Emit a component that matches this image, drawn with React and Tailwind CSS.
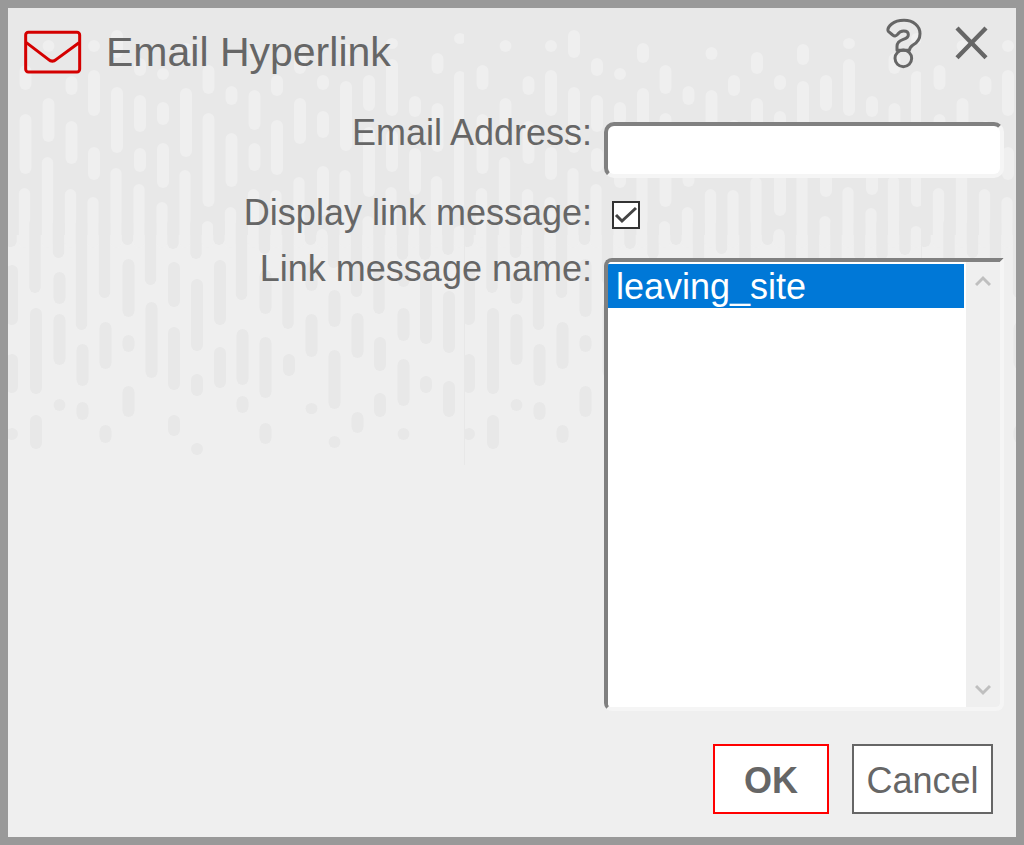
import { useState } from 'react';

// Background texture: each column is [centre x, [top, bottom], ...].
// Light bars melt into the lower half, dark bars melt into the upper half.
const TILE = 457;
const HORIZON = 227;

const lightBars = [
  [17.5, [57, 82], [106, 166], [180, 240]],
  [40.5, [32, 44], [90, 134], [149, 240]],
  [63.5, [68, 87], [113, 156], [181, 240]],
  [86, [32, 44], [62, 108], [139, 172], [189, 240]],
  [109, [22, 50], [79, 145], [160, 240]],
  [132, [50, 68], [87, 124], [140, 164], [176, 240]],
  [155, [60, 72], [94, 117], [135, 180], [194, 240]],
  [178, [35, 55], [80, 149], [162, 240]],
  [200.5, [57, 86], [105, 199], [213, 240]],
  [223.5, [78, 97], [125, 179], [199, 240]],
  [246.5, [39, 52], [82, 122], [135, 163], [181, 240]],
  [269, [67, 88], [112, 167], [182, 240]],
  [292, [44, 66], [90, 136], [169, 240]],
  [315, [67, 82], [103, 130], [158, 208], [221, 240]],
  [338, [36, 57], [73, 143], [162, 240]],
  [361, [67, 103], [119, 189], [208, 240]],
  [384, [30, 41], [51, 108], [122, 164], [179, 240]],
  [407, [88, 109], [140, 187], [200, 240]],
  [429.5, [45, 66], [95, 144], [168, 240]],
  [452, [25, 36], [63, 199], [218, 240]],
];

const darkBars = [
  [4, [210, 239], [257, 317], [346, 385], [420, 432]],
  [28, [210, 285], [300, 386], [407, 441]],
  [51.5, [210, 250], [264, 296], [306, 357], [391, 403]],
  [74.5, [210, 322], [336, 378], [394, 412]],
  [97.5, [210, 290], [314, 361], [417, 435]],
  [120.5, [210, 237], [251, 309], [327, 344], [378, 409]],
  [143.5, [210, 277], [294, 370]],
  [166, [210, 241], [254, 299], [319, 382], [407, 428]],
  [189, [210, 251], [271, 343], [366, 388], [435, 447]],
  [212, [210, 237], [252, 317], [339, 380]],
  [234.5, [210, 292], [321, 377], [388, 405]],
  [257.5, [210, 246], [262, 306], [329, 390], [415, 436]],
  [281, [210, 321], [346, 368]],
  [303.5, [210, 237], [253, 283], [306, 349], [395, 406]],
  [326.5, [210, 260], [282, 319], [342, 401], [428, 440]],
  [349.5, [210, 289], [305, 350], [404, 425]],
  [372, [210, 306], [329, 363], [385, 409]],
  [395.5, [210, 252], [259, 279], [300, 333], [351, 398], [420, 432]],
  [418, [210, 252], [267, 336], [368, 385]],
  [441, [210, 247], [283, 345], [373, 409]],
];

const Bars = ({ columns, fill }) =>
  columns.map(([x, ...spans]) =>
    spans.map(([top, bottom]) => {
      // Bars that cross the horizon lean a little to the left
      const crosses = top < 240 && bottom >= 237;
      const width = crosses ? 11.4 : 12;
      return (
        <rect
          key={`${x}-${top}`}
          x={x - width / 2 - (crosses ? 1 : 0)}
          y={top}
          width={width}
          height={bottom - top}
          rx={width / 2}
          fill={fill}
        />
      );
    })
  );

const Backdrop = () => (
  <svg className="absolute inset-x-0 top-0 w-full h-[457px]" aria-hidden="true">
    <defs>
      <pattern id="rain" width={TILE} height={TILE} patternUnits="userSpaceOnUse">
        <rect width={TILE} height={HORIZON} fill="#e8e8e8" />
        <Bars columns={lightBars} fill="#efefef" />
        <Bars columns={darkBars} fill="#e8e8e8" />
        <rect x="456" width="1" height={TILE} fill="#e8e8e8" />
      </pattern>
    </defs>
    <rect width="100%" height="100%" fill="url(#rain)" />
  </svg>
);

const EnvelopeIcon = () => (
  <svg
    className="w-[59px] h-11 mt-[22px] shrink-0"
    viewBox="0 0 177 132"
    fill="none"
    stroke="#d40000"
    strokeWidth="9"
    aria-hidden="true"
  >
    <rect x="8" y="7" width="162" height="119" rx="8" />
    <path d="M10 38 L76 88 Q88 99 100 88 L168 38" />
  </svg>
);

const HelpIcon = () => (
  <svg
    className="w-9 h-[52px]"
    viewBox="0 0 108 156"
    fill="none"
    stroke="#666"
    strokeWidth="9"
    strokeLinejoin="round"
    aria-hidden="true"
  >
    <path d="M7 43 C3 36 9 28 17 21 C27 13 39 10 54 10 C82 10 102 27 102 50 C102 67 93 77 81 84 C73 89 71 93 70 100 L33 100 L33 88 C33 78 40 71 52 67 C62 64 67 59 67 53 C67 46 61 42 53 42 C43 42 38 47 34 53 C30 58 25 58 20 54 Z" />
    <circle cx="52" cy="124" r="25" />
  </svg>
);

const CloseIcon = () => (
  <svg className="w-[35px] h-[35px]" viewBox="0 0 105 105" stroke="#666" strokeWidth="13" aria-hidden="true">
    <path d="M9 9 L96 98 M96 9 L9 98" />
  </svg>
);

const Chevron = ({ d }) => (
  <svg className="w-4 h-4" viewBox="0 0 16 16" fill="none" stroke="#bfbfbf" strokeWidth="3" aria-hidden="true">
    <path d={d} />
  </svg>
);

const App = () => {
  const [email, setEmail] = useState('');
  const [showMessage, setShowMessage] = useState(true);
  const [message, setMessage] = useState(['leaving_site']);

  return (
    <div className="relative min-h-screen border-8 border-[#999] bg-[#efefef] text-[#666] font-['Liberation_Sans',Arial,sans-serif] text-[36px] leading-[42px]">
      <Backdrop />

      <div className="relative">
        {/* Title bar */}
        <header className="flex items-start h-[104px] pl-[15px] pr-[27px]">
          <EnvelopeIcon />
          <h1 className="flex-1 ml-6 mt-5 text-[41px] leading-[48px]">Email Hyperlink</h1>
          <button type="button" aria-label="Help" className="mt-[9px]">
            <HelpIcon />
          </button>
          <button type="button" aria-label="Close" className="mt-[17px] ml-8">
            <CloseIcon />
          </button>
        </header>

        <form className="pr-3 pb-[23px]" onSubmit={(e) => e.preventDefault()}>
          <div className="grid grid-cols-[minmax(0,1fr)_400px] items-start gap-x-3">
            <label htmlFor="email" className="text-right">
              Email Address:
            </label>
            <input
              id="email"
              type="text"
              value={email}
              onChange={(e) => setEmail(e.target.value)}
              className="w-full h-14 mt-[10px] px-2 bg-white border-4 border-t-[#808080] border-l-[#808080] border-r-[#f5f5f5] border-b-[#f5f5f5] rounded-[10px] outline-none"
            />

            <label htmlFor="show" className="mt-[14px] text-right">
              Display link message:
            </label>
            <div className="relative w-7 h-7 mt-[23px] ml-2">
              <input
                id="show"
                type="checkbox"
                checked={showMessage}
                onChange={(e) => setShowMessage(e.target.checked)}
                className="peer block appearance-none w-7 h-7 bg-white border-2 border-[#333]"
              />
              <svg
                className="absolute inset-0 w-7 h-7 invisible peer-checked:visible pointer-events-none"
                viewBox="0 0 28 28"
                fill="none"
                stroke="#444"
                strokeWidth="3"
                aria-hidden="true"
              >
                <path d="M4 14 L10 20 L24 7" />
              </svg>
            </div>

            <label htmlFor="message" className="mt-[14px] text-right">
              Link message name:
            </label>
            <div className="flex h-[453px] mt-6 bg-white border-4 border-t-[#808080] border-l-[#808080] border-r-[#f5f5f5] border-b-[#f5f5f5] rounded-lg rounded-tr-none overflow-hidden">
              <select
                id="message"
                multiple
                value={message}
                onChange={(e) => setMessage([e.target.value])}
                className="flex-1 min-w-0 h-full pt-[2px] pr-[2px] overflow-hidden bg-white outline-none"
              >
                <option
                  value="leaving_site"
                  className="h-11 px-2 pt-[2px] pb-0 leading-[42px] checked:text-white checked:bg-[linear-gradient(#0078d7,#0078d7)]"
                >
                  leaving_site
                </option>
              </select>
              <div className="flex flex-col items-center justify-between w-[34px] py-[10px] bg-[#efefef]">
                <Chevron d="M1 13 L8 6 L15 13" />
                <Chevron d="M1 5 L8 12 L15 5" />
              </div>
            </div>
          </div>

          {/* Actions */}
          <div className="flex justify-end gap-[23px] mt-[33px] pr-[11px]">
            <button type="submit" className="w-[116px] h-[70px] pt-1 bg-white border-2 border-[#f00] font-bold">
              OK
            </button>
            <button type="button" className="w-[141px] h-[70px] pt-1 bg-white border-2 border-[#666]">
              Cancel
            </button>
          </div>
        </form>
      </div>
    </div>
  );
};

export default App;
